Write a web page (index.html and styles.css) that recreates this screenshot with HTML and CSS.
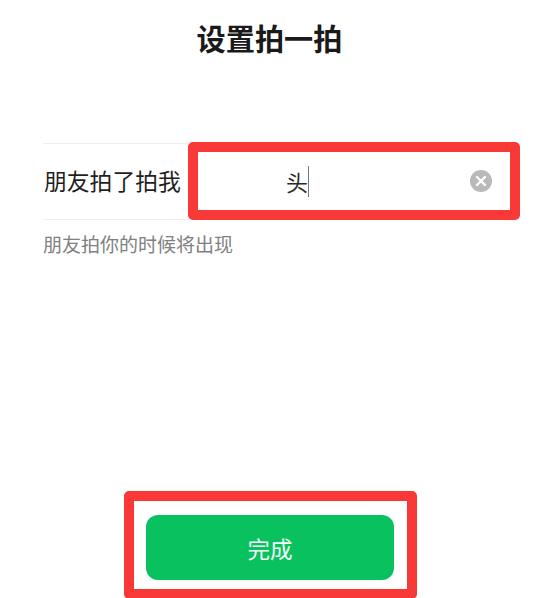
FILE: index.html
```html
<!DOCTYPE html>
<html lang="zh-CN">
<head>
    <meta charset="UTF-8">
    <meta name="viewport" content="width=device-width, initial-scale=1.0">
    <title>设置拍一拍</title>
    <link rel="stylesheet" href="styles.css">
</head>
<body>
    <div class="page">
        <h1>设置拍一拍</h1>

        <div class="pat-row">
            <div class="pat-label">朋友拍了拍我</div>
            <div class="pat-field">
                <span class="pat-value">头</span><span class="caret"></span>
                <svg class="clear-icon" viewBox="0 0 22 22" aria-hidden="true">
                    <circle cx="11" cy="11" r="11" fill="#b9b9b9"/>
                    <path d="M7 7l8 8M15 7l-8 8" stroke="#fff" stroke-width="2.4" stroke-linecap="round"/>
                </svg>
            </div>
        </div>

        <p class="hint">朋友拍你的时候将出现</p>

        <div class="done-box">
            <button class="done-btn">完成</button>
        </div>
    </div>
</body>
</html>
```

FILE: styles.css
```css
body {
    margin: 0;
    background-color: white;
    font-family: "Liberation Sans", "Noto Sans CJK SC", sans-serif;
}

.page {
    height: 598px;
    overflow: hidden;
    display: flex;
    flex-direction: column;
}

h1 {
    margin: 21px 1px 0 0;
    font-size: 29.2px;
    line-height: 38px;
    font-weight: bold;
    color: #1a1a1a;
    text-align: center;
}

.pat-row {
    display: flex;
    margin: 83px 20px 0 43px;
    height: 78px;
}

.pat-label {
    width: 144px;
    margin-top: 1px;
    height: 75px;
    padding-left: 1px;
    box-sizing: content-box;
    border-top: 1px solid #eeeeee;
    border-bottom: 1px solid #eeeeee;
    font-size: 22.8px;
    line-height: 77px;
    color: #1f1f1f;
    white-space: nowrap;
}

.pat-field {
    flex: 1;
    display: flex;
    align-items: center;
    border: 10px solid #f93838;
    border-radius: 5px;
    padding-left: 88px;
    padding-right: 18px;
}

.pat-value {
    font-size: 22px;
    color: #2a2a2a;
}

.caret {
    width: 1px;
    height: 31px;
    background-color: #777;
}

.clear-icon {
    width: 22px;
    height: 22px;
    margin-left: auto;
}

.hint {
    margin: 13px 0 0 43px;
    font-size: 19px;
    line-height: 26px;
    color: #808080;
}

.done-box {
    margin: auto 0 -1px 124px;
    width: 293px;
    height: 108px;
    box-sizing: border-box;
    border: 10px solid #f93838;
    border-radius: 5px;
    padding: 14px 13px 0 12px;
}

.done-btn {
    display: block;
    width: 100%;
    height: 65px;
    border: none;
    border-radius: 12px;
    background-color: #0ac160;
    color: #f4fff8;
    font-family: inherit;
    font-size: 22.5px;
}
```
